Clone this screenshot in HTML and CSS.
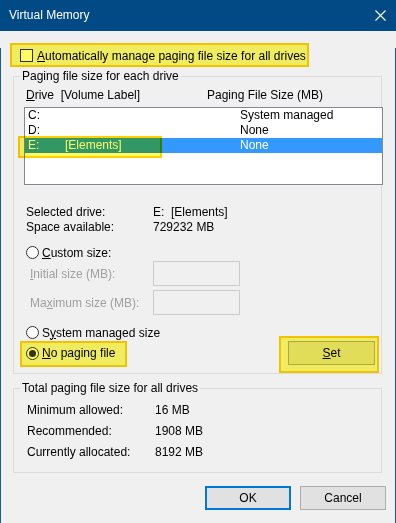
FILE: index.html
```html
<!DOCTYPE html>
<html>
    <head>
        <meta charset="utf-8">
        <title>Virtual Memory</title>
        <link rel="stylesheet" href="styles.css">
    </head>
    <body>
        <div class="window">
            <div class="titlebar">
                <span class="title">Virtual Memory</span>
                <svg class="close" width="11" height="11" viewBox="0 0 11 11">
                    <path d="M0.5 0.5 L10.5 10.5 M10.5 0.5 L0.5 10.5" stroke="#ffffff" stroke-width="1.1" fill="none"/>
                </svg>
            </div>
            <div class="frame">
                <div class="check-row">
                    <span class="checkbox"></span>
                    <span><u>A</u>utomatically manage paging file size for all drives</span>
                </div>
                <fieldset class="group drives">
                    <legend>Paging file size for each drive</legend>
                    <div class="list-head">
                        <span class="col-drive"><u>D</u>rive&nbsp; [Volume Label]</span>
                        <span>Paging File Size (MB)</span>
                    </div>
                    <div class="listview">
                        <div class="row"><span class="c1">C:</span><span class="c2"></span><span>System managed</span></div>
                        <div class="row"><span class="c1">D:</span><span class="c2"></span><span>None</span></div>
                        <div class="row sel"><span class="c1">E:</span><span class="c2">[Elements]</span><span>None</span></div>
                    </div>
                    <div class="info">
                        <span>Selected drive:</span><span>E:&nbsp; [Elements]</span>
                        <span>Space available:</span><span>729232 MB</span>
                    </div>
                    <div class="radio-row custom">
                        <span class="radio"></span>
                        <span><u>C</u>ustom size:</span>
                    </div>
                    <div class="size-row first">
                        <span class="size-label"><u>I</u>nitial size (MB):</span>
                        <span class="input"></span>
                    </div>
                    <div class="size-row">
                        <span class="size-label">Ma<u>x</u>imum size (MB):</span>
                        <span class="input"></span>
                    </div>
                    <div class="radio-row sysman">
                        <span class="radio"></span>
                        <span>S<u>y</u>stem managed size</span>
                    </div>
                    <div class="last-row">
                        <div class="radio-row">
                            <span class="radio checked"></span>
                            <span><u>N</u>o paging file</span>
                        </div>
                        <span class="button set-button"><u>S</u>et</span>
                    </div>
                </fieldset>
                <fieldset class="group totals">
                    <legend>Total paging file size for all drives</legend>
                    <div class="totals-grid">
                        <span>Minimum allowed:</span><span>16 MB</span>
                        <span>Recommended:</span><span>1908 MB</span>
                        <span>Currently allocated:</span><span>8192 MB</span>
                    </div>
                </fieldset>
                <div class="buttons">
                    <span class="button default">OK</span>
                    <span class="button">Cancel</span>
                </div>
            </div>
            <div class="hl hl-auto"></div>
            <div class="hl hl-drive"></div>
            <div class="hl hl-nopaging"></div>
            <div class="hl hl-set"></div>
        </div>
    </body>
</html>
```

FILE: styles.css
```css
body {
    margin: 0px;
    font-family: "Liberation Sans", Arial, sans-serif;
    font-size: 12px;
    color: #000000;
}
.window {
    position: relative;
    width: 396px;
    height: 523px;
    background: #f0f0f0;
}
.titlebar {
    height: 31px;
    background: #024a86;
    color: white;
    display: flex;
    align-items: center;
    justify-content: space-between;
    padding: 0px 10px 0px 9px;
}
.title {
    line-height: 15px;
}
.frame {
    height: 492px;
    box-sizing: border-box;
    border: 1px solid #1d5a93;
    border-top: 0px;
}
u {
    text-underline-offset: 1px;
}
.check-row {
    display: flex;
    align-items: center;
    height: 15px;
    margin: 17px 0px 0px 19px;
    gap: 4px;
}
.checkbox {
    width: 13px;
    height: 13px;
    box-sizing: border-box;
    border: 1px solid #333333;
    background: white;
}
.group {
    margin: 6px 0px 0px 12px;
    width: 369px;
    box-sizing: border-box;
    border: 1px solid #dcdcdc;
    padding: 0px 0px 8px 0px;
    min-inline-size: 0;
}
.group legend {
    margin-left: 6px;
    padding: 0px 2px;
    line-height: 15px;
}
.list-head {
    display: flex;
    line-height: 15px;
    margin: 4px 0px 0px 12px;
}
.col-drive {
    width: 181px;
}
.listview {
    margin: 4px 0px 0px 10px;
    width: 359px;
    height: 78px;
    box-sizing: border-box;
    border: 1px solid #828790;
    background: white;
}
.row {
    display: flex;
    height: 15px;
    line-height: 15px;
    padding-left: 3px;
}
.row.sel {
    background: #3399ff;
    color: white;
}
.c1 {
    width: 37px;
}
.c2 {
    width: 175px;
}
.info {
    display: grid;
    grid-template-columns: 127px auto;
    line-height: 15px;
    margin: 20px 0px 0px 12px;
}
.radio-row {
    display: flex;
    align-items: center;
    gap: 3px;
    height: 15px;
    margin-left: 12px;
}
.radio {
    width: 13px;
    height: 13px;
    box-sizing: border-box;
    border: 1px solid #333333;
    border-radius: 50%;
    background: white;
    display: flex;
    align-items: center;
    justify-content: center;
}
.radio.checked::after {
    content: "";
    width: 7px;
    height: 7px;
    border-radius: 50%;
    background: #333333;
}
.custom {
    margin-top: 10px;
}
.size-row {
    display: flex;
    align-items: center;
    margin: 4px 0px 0px 16px;
    color: #a0a0a0;
}
.size-row.first {
    margin-top: 1px;
}
.size-label {
    width: 123px;
}
.input {
    width: 87px;
    height: 25px;
    box-sizing: border-box;
    border: 1px solid #cccccc;
    background: #f0f0f0;
}
.sysman {
    margin-top: 10px;
}
.last-row {
    display: flex;
    align-items: center;
    justify-content: space-between;
    height: 24px;
    margin: 1px 6px 0px 0px;
}
.button {
    width: 86px;
    height: 24px;
    box-sizing: border-box;
    border: 1px solid #adadad;
    background: #e1e1e1;
    display: flex;
    align-items: center;
    justify-content: center;
}
.set-button {
    width: 87px;
}
.button.default {
    border: 2px solid #0078d7;
}
.totals {
    margin-top: 7px;
    padding-bottom: 9px;
}
.totals-grid {
    display: grid;
    grid-template-columns: 128px auto;
    line-height: 21px;
    margin: 4px 0px 0px 13px;
}
.buttons {
    display: flex;
    justify-content: flex-end;
    gap: 9px;
    margin: 13px 9px 0px 0px;
}
.hl {
    position: absolute;
    box-sizing: border-box;
    border: 2px solid #ffd000;
    background: #fffb65;
    mix-blend-mode: multiply;
}
.hl-auto {
    left: 10px;
    top: 43px;
    width: 299px;
    height: 24px;
}
.hl-drive {
    left: 18px;
    top: 136px;
    width: 144px;
    height: 22px;
}
.hl-nopaging {
    left: 20px;
    top: 341px;
    width: 107px;
    height: 26px;
}
.hl-set {
    left: 279px;
    top: 336px;
    width: 100px;
    height: 37px;
}
```
